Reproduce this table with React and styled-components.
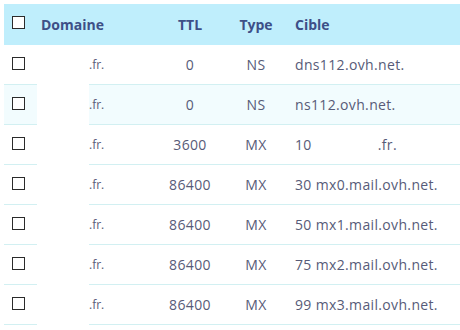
import React from 'react'
import styled, { createGlobalStyle } from 'styled-components'

const GlobalStyle = createGlobalStyle`
  html, body {
    margin: 0;
    padding: 0;
    background: #fff;
    overflow: hidden;
  }
  body {
    font-family: "Open Sans", "Liberation Sans", sans-serif;
  }
`

const records = [
  { ttl: '0', type: 'NS', target: 'dns112.ovh.net.' },
  { ttl: '0', type: 'NS', target: 'ns112.ovh.net.', highlight: true },
  { ttl: '3600', type: 'MX', target: '10', suffix: '.fr.' },
  { ttl: '86400', type: 'MX', target: '30 mx0.mail.ovh.net.' },
  { ttl: '86400', type: 'MX', target: '50 mx1.mail.ovh.net.' },
  { ttl: '86400', type: 'MX', target: '75 mx2.mail.ovh.net.' },
  { ttl: '86400', type: 'MX', target: '99 mx3.mail.ovh.net.' }
]

const Table = styled.div`
  position: relative;
  margin: 4px 0 0 4px;
  width: 456px;
`
const Row = styled.div`
  display: grid;
  grid-template-columns: 33px 113px 80px 52px 1fr;
  align-items: center;
  height: ${p => (p.head ? '41px' : '39px')};
  background: ${p => (p.head ? '#bfeefc' : p.highlight ? '#f2fcfe' : '#fff')};
  border-bottom: ${p => (p.head ? 'none' : '1px solid #d2f0f2')};
  font-size: 14px;
  letter-spacing: ${p => (p.head ? '0' : '0.35px')};
  color: ${p => (p.head ? '#3d4f87' : '#575b78')};
  font-weight: ${p => (p.head ? 700 : 400)};
`
const CheckCell = styled.div`
  display: flex;
  align-items: center;
  padding-left: 8px;
  padding-bottom: ${p => (p.head ? '5px' : '3px')};
`
const Cell = styled.div`
  text-align: ${p => p.align || 'left'};
  padding-left: ${p => p.pad || 0}px;
  white-space: nowrap;
  overflow: hidden;
  font-size: ${p => (p.small ? '12px' : 'inherit')};
  letter-spacing: ${p => (p.small ? '0' : 'inherit')};
`
const Box = styled.span`
  display: block;
  width: 11px;
  height: 11px;
  border: 1px solid #2b2b2b;
  background: #fff;
`
const Gap = styled.span`
  display: inline-block;
  width: 66px;
`
const Redact = styled.div`
  position: absolute;
  top: 41px;
  bottom: 0;
  left: 33px;
  width: 52px;
  background: #fff;
`

export default function App () {
  return (
    <>
      <GlobalStyle />
      <Table>
        <Row head>
          <CheckCell head><Box /></CheckCell>
          <Cell pad={4}>Domaine</Cell>
          <Cell align='center'>TTL</Cell>
          <Cell align='center'>Type</Cell>
          <Cell pad={13}>Cible</Cell>
        </Row>
        {records.map((r, i) => (
          <Row key={i} highlight={r.highlight}>
            <CheckCell><Box /></CheckCell>
            <Cell pad={52} small>.fr.</Cell>
            <Cell align='center'>{r.ttl}</Cell>
            <Cell align='center'>{r.type}</Cell>
            <Cell pad={13}>
              {r.target}
              {r.suffix && <><Gap />{r.suffix}</>}
            </Cell>
          </Row>
        ))}
        <Redact />
      </Table>
    </>
  )
}
